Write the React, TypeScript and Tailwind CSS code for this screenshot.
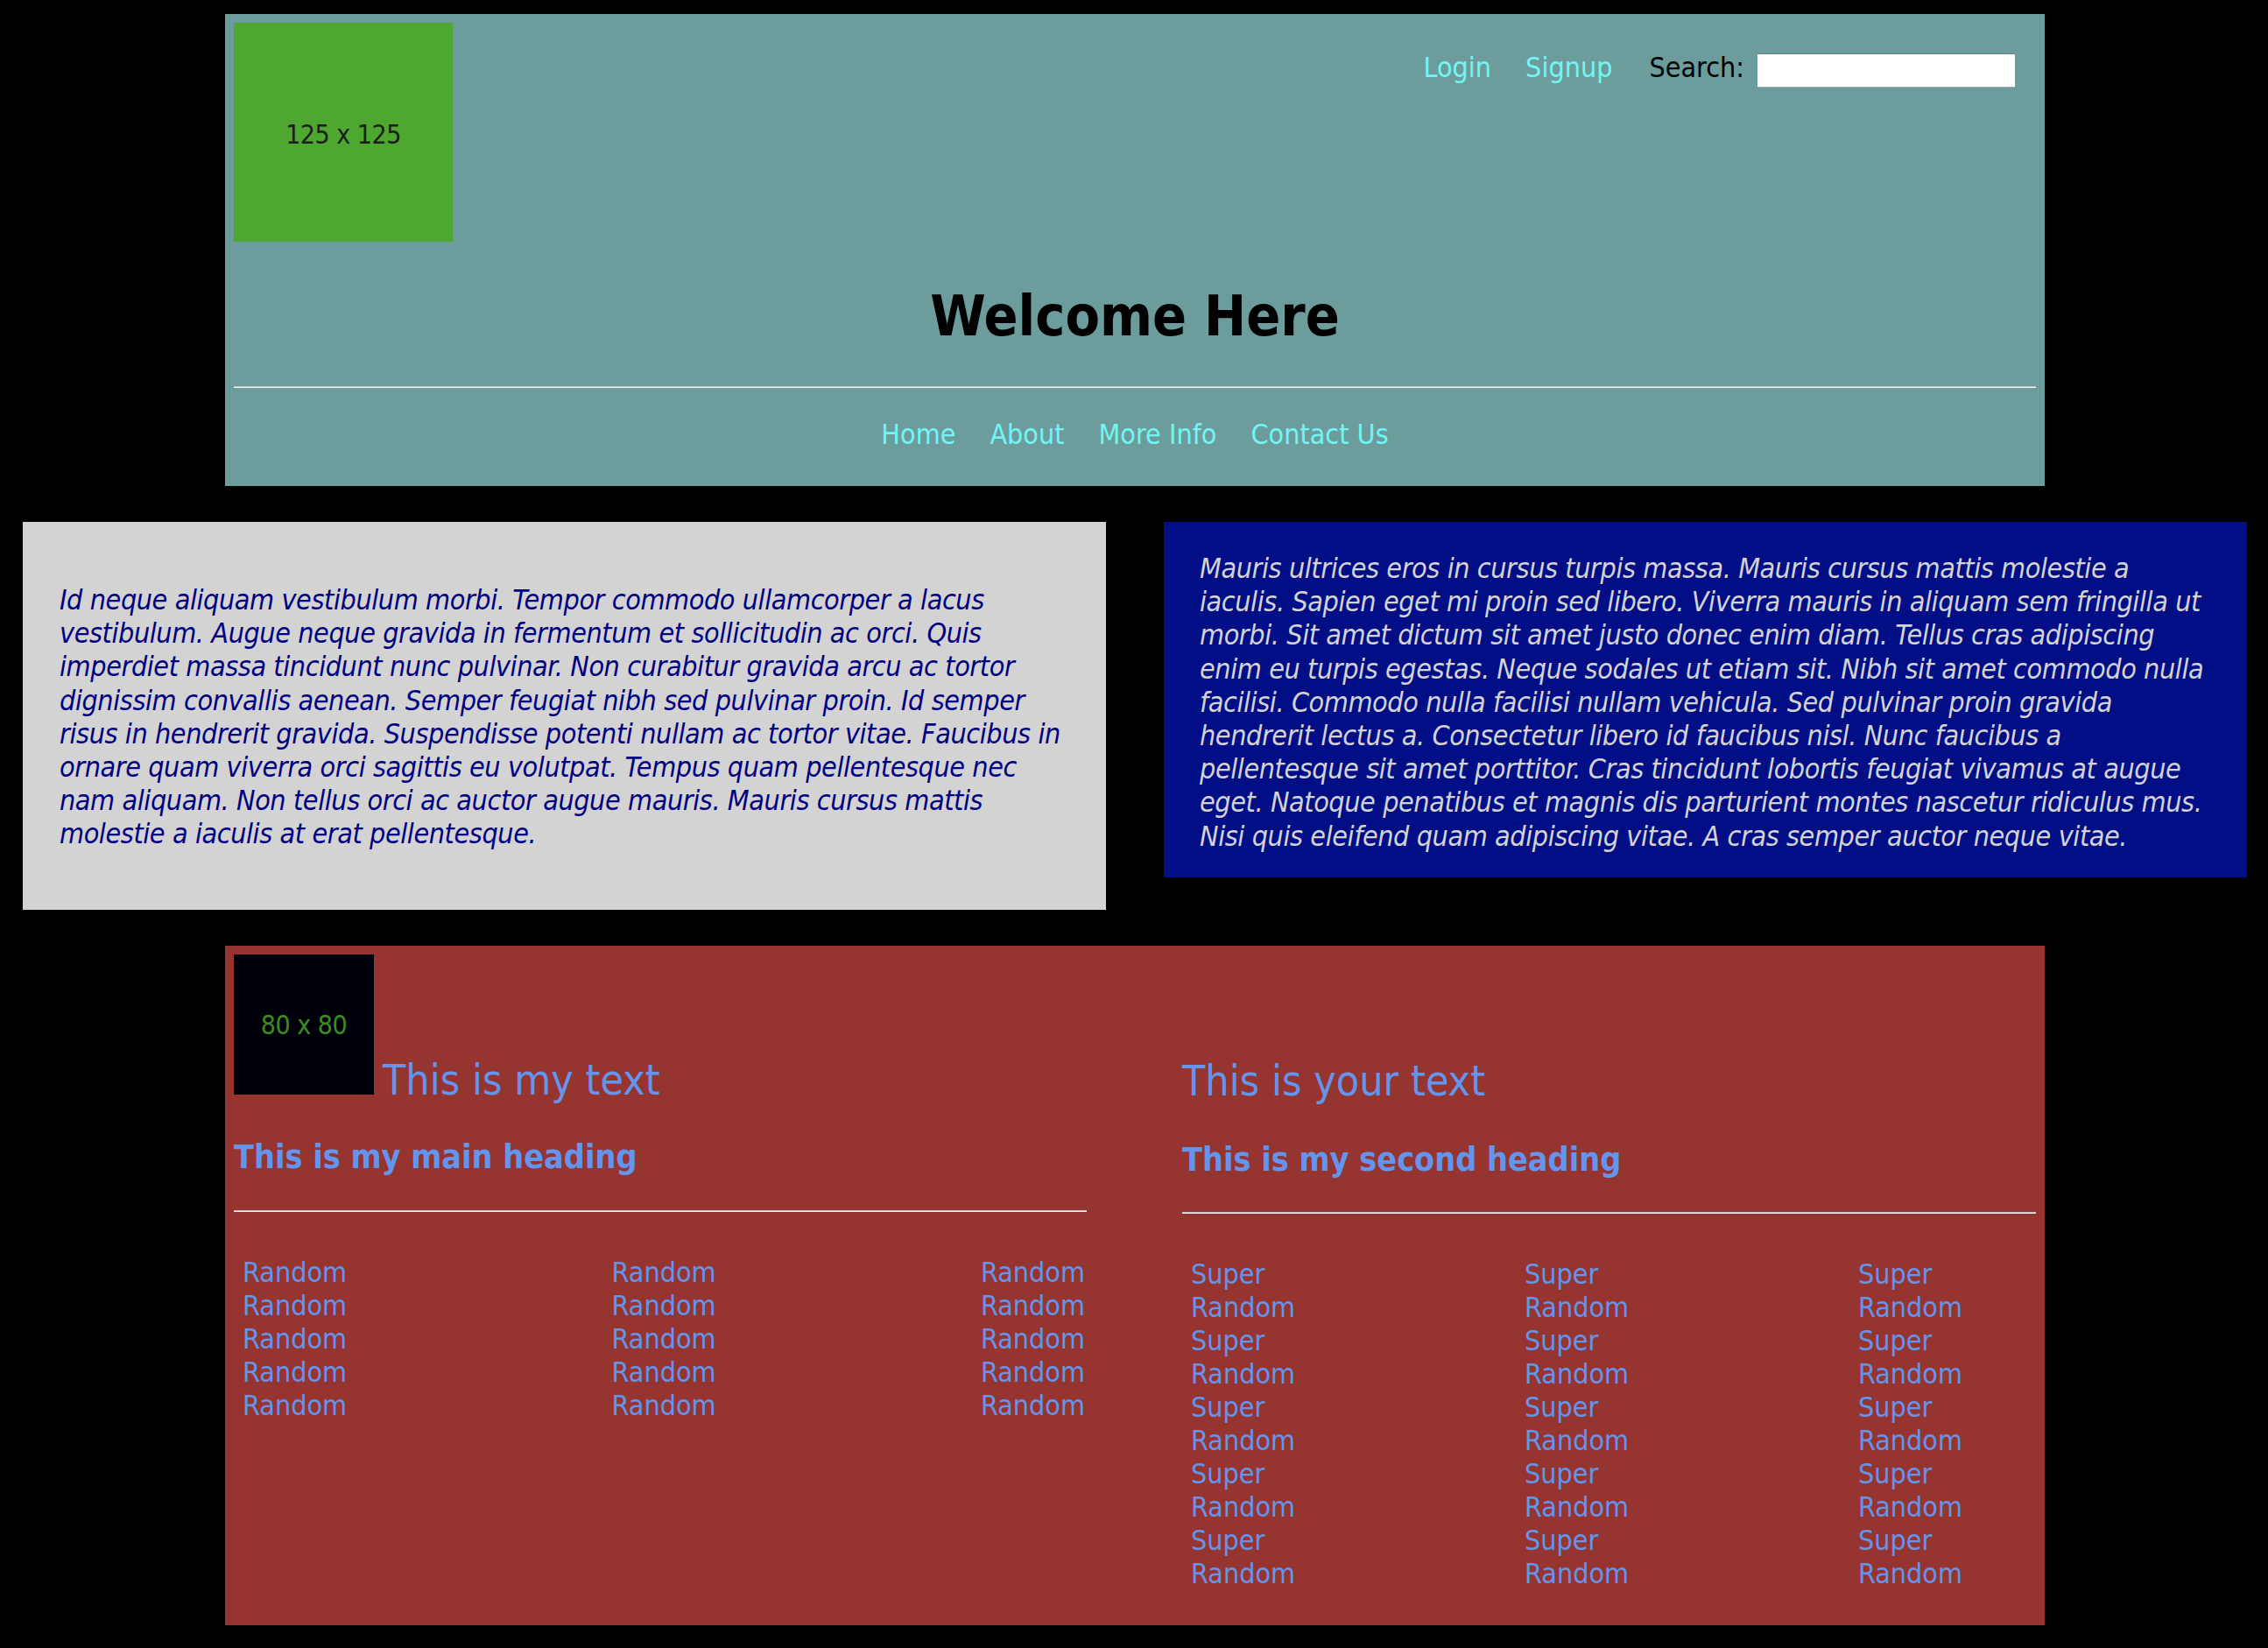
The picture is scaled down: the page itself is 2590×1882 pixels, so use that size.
const greyLines = [
  "Id neque aliquam vestibulum morbi. Tempor commodo ullamcorper a lacus",
  "vestibulum. Augue neque gravida in fermentum et sollicitudin ac orci. Quis",
  "imperdiet massa tincidunt nunc pulvinar. Non curabitur gravida arcu ac tortor",
  "dignissim convallis aenean. Semper feugiat nibh sed pulvinar proin. Id semper",
  "risus in hendrerit gravida. Suspendisse potenti nullam ac tortor vitae. Faucibus in",
  "ornare quam viverra orci sagittis eu volutpat. Tempus quam pellentesque nec",
  "nam aliquam. Non tellus orci ac auctor augue mauris. Mauris cursus mattis",
  "molestie a iaculis at erat pellentesque.",
];

const blueLines = [
  "Mauris ultrices eros in cursus turpis massa. Mauris cursus mattis molestie a",
  "iaculis. Sapien eget mi proin sed libero. Viverra mauris in aliquam sem fringilla ut",
  "morbi. Sit amet dictum sit amet justo donec enim diam. Tellus cras adipiscing",
  "enim eu turpis egestas. Neque sodales ut etiam sit. Nibh sit amet commodo nulla",
  "facilisi. Commodo nulla facilisi nullam vehicula. Sed pulvinar proin gravida",
  "hendrerit lectus a. Consectetur libero id faucibus nisl. Nunc faucibus a",
  "pellentesque sit amet porttitor. Cras tincidunt lobortis feugiat vivamus at augue",
  "eget. Natoque penatibus et magnis dis parturient montes nascetur ridiculus mus.",
  "Nisi quis eleifend quam adipiscing vitae. A cras semper auctor neque vitae.",
];

function Rule() {
  return <div className="h-[2px] w-full border-t border-b border-t-[#c4c4c4] border-b-[#f4f4f4]" />;
}

function RandomCol() {
  return (
    <ul className="flex flex-col">
      {[0, 1, 2, 3, 4].map((i) => (
        <li key={i}>Random</li>
      ))}
    </ul>
  );
}

function SuperCol() {
  return (
    <ul className="flex flex-col">
      {[0, 1, 2, 3, 4].map((i) => (
        <li key={i} className="flex flex-col">
          <span>Super</span>
          <span>Random</span>
        </li>
      ))}
    </ul>
  );
}

export default function App() {
  return (
    <div className="min-h-[1882px] bg-black pt-[16px] pb-[26px] font-['DejaVu_Sans_Condensed','DejaVu_Sans',sans-serif] text-[32px]">
      <header className="ml-[257px] w-[2078px] bg-[#6c9c9c] p-[10px]">
        <div className="flex items-start justify-between">
          <div className="flex h-[250px] w-[250px] items-center justify-center bg-[#4ea72e] pt-[4px] text-[30px] tracking-[-0.5px] text-[#1c1c1c]">
            125 x 125
          </div>
          <div className="mt-[32px] mr-[24px] flex items-start leading-[38px]">
            <a className="text-[#72f5f5]">Login</a>
            <a className="ml-[39px] text-[#72f5f5]">Signup</a>
            <span className="ml-[42px] text-black">Search:</span>
            <input
              type="text"
              className="ml-[15px] mt-[3px] h-[39px] w-[294px] border-t border-b border-t-[#5b8888] border-b-[#a9a9a9] bg-white outline-none"
            />
          </div>
        </div>
        <h1 className="mt-[47px] mb-[41px] text-center text-[64px] font-bold leading-[77px] text-black">
          Welcome Here
        </h1>
        <Rule />
        <nav className="mt-[34px] mb-[30px] flex justify-center gap-[39px] leading-[38px] text-[#72f5f5]">
          <a>Home</a>
          <a>About</a>
          <a>More Info</a>
          <a>Contact Us</a>
        </nav>
      </header>

      <div className="mt-[41px] flex items-start justify-between pl-[26px] pr-[24px]">
        <div className="w-[1237px] bg-[#d3d3d3] pl-[42px] pt-[70px] pb-[67px] italic leading-[38.2px] tracking-[-0.4px] text-[#000080]">
          {greyLines.map((l, i) => (
            <div key={i} className="whitespace-nowrap">
              {l}
            </div>
          ))}
        </div>
        <div className="w-[1237px] bg-[#010e86] pl-[41px] pt-[34px] pb-[28px] italic leading-[38.2px] tracking-[-0.4px] text-[#d3d3d3]">
          {blueLines.map((l, i) => (
            <div key={i} className="whitespace-nowrap">
              {l}
            </div>
          ))}
        </div>
      </div>

      <section className="ml-[257px] mt-[41px] flex w-[2078px] items-start justify-between bg-[#963430] p-[10px] text-[#6495ed]">
        <div className="w-[974px]">
          <div className="flex items-end">
            <div className="flex h-[160px] w-[160px] items-center justify-center bg-[#00000a] pt-[2px] text-[30px] tracking-[-0.5px] text-[#3d8c1e]">
              80 x 80
            </div>
            <span className="ml-[10px] mb-[-7px] text-[48px] leading-[48px]">This is my text</span>
          </div>
          <h3 className="mt-[49px] text-[37.44px] font-bold leading-[45px]">This is my main heading</h3>
          <div className="mt-[38px]">
            <Rule />
          </div>
          <div className="mt-[50px] flex justify-between pl-[10px] pr-[2px] leading-[38px]">
            <RandomCol />
            <RandomCol />
            <RandomCol />
          </div>
        </div>
        <div className="mb-[30px] w-[975px]">
          <p className="pt-[115px] text-[48px] leading-[58px]">This is your text</p>
          <h3 className="mt-[39px] text-[37.44px] font-bold leading-[45px]">This is my second heading</h3>
          <div className="mt-[37px]">
            <Rule />
          </div>
          <div className="mt-[50px] flex w-[891px] justify-between pl-[10px] leading-[38px]">
            <SuperCol />
            <SuperCol />
            <SuperCol />
          </div>
        </div>
      </section>
    </div>
  );
}
